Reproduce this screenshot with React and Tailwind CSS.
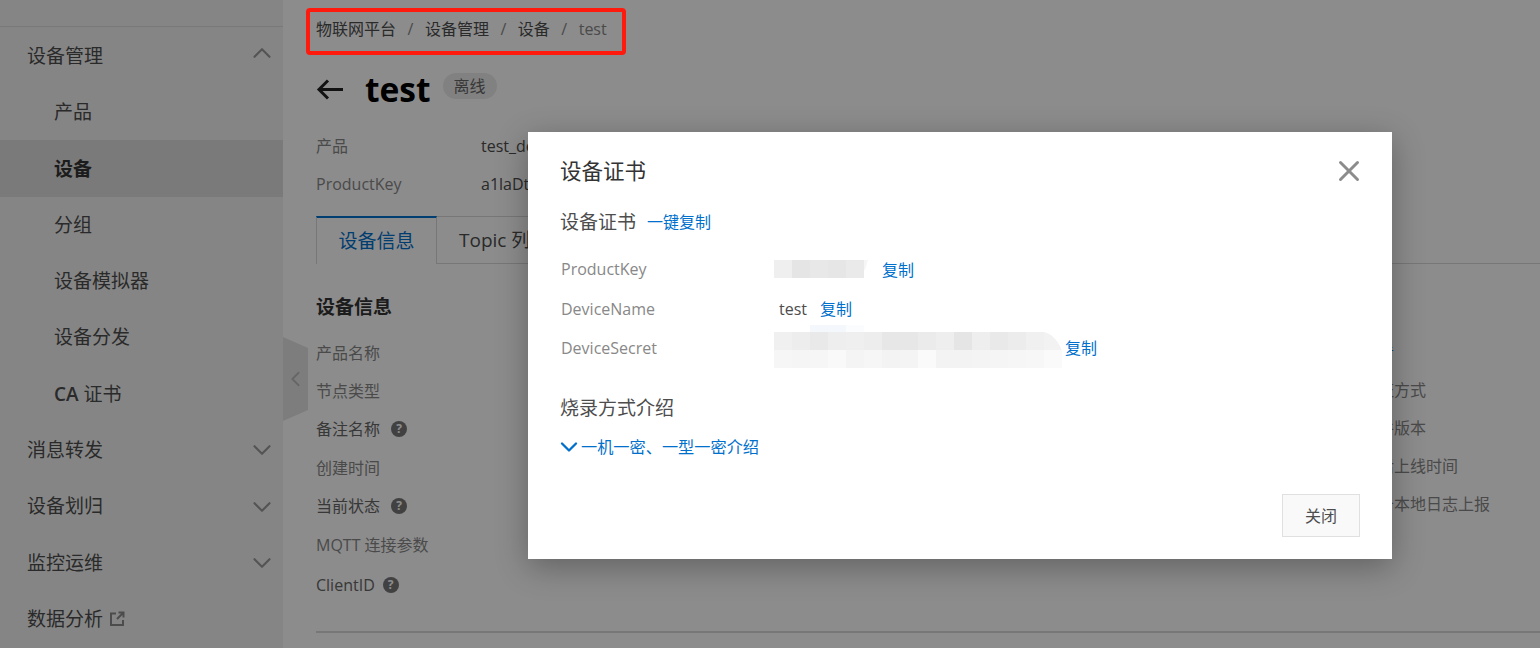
import { ChevronDown, ChevronUp, ChevronLeft, X } from 'lucide-react'

const menu = [
  { label: '设备管理', open: true },
  { label: '产品', sub: true },
  { label: '设备', sub: true, active: true },
  { label: '分组', sub: true },
  { label: '设备模拟器', sub: true },
  { label: '设备分发', sub: true },
  { label: '证书', prefix: 'CA', sub: true },
  { label: '消息转发', closed: true },
  { label: '设备划归', closed: true },
  { label: '监控运维', closed: true },
  { label: '数据分析', external: true },
]

const leftRows = [
  { label: '产品名称', h: 'h-[38px]' },
  { label: '节点类型', h: 'h-[38px]' },
  { label: '备注名称', help: 'ml-[11px]', h: 'h-[38px]' },
  { label: '创建时间', h: 'h-[39px]' },
  { label: '当前状态', help: 'ml-[11px]', h: 'h-[38px]' },
  { label: 'MQTT 连接参数', h: 'h-[40px]' },
  { label: 'ClientID', help: 'ml-[8px]', h: 'h-[40px]' },
]

const rightRows = ['查看', '认证方式', '固件版本', '最后上线时间', '设备本地日志上报']

const keyCells = ['#efefef', '#e5e5e5', '#e8e8e8', '#e6e6e6', '#eaeaea']
const secretTop = ['#f0f0f0', '#ededed', '#e9e9e9', '#eeeeee', '#efefef', '#ededed', '#e7e7e7', '#e7e7e7', '#ebebeb', '#eeeeee', '#e5e5e5', '#eeeeee', '#e9e9e9', '#ececec', '#f0f0f0', '#f2f2f2']
const secretBottom = ['#f6f6f6', '#f5f5f5', '#f6f6f6', '#f9f9f9', '#f4f4f4', '#f6f6f6', '#f3f3f3', '#f4f4f4', '#fafafa', '#f3f3f3', '#f3f3f3', '#f4f4f4', '#f5f5f5', '#f6f6f6', '#f7f7f7', '#fafafa']

const Help = ({ className }) => (
  <span className={`${className} inline-flex h-4 w-4 items-center justify-center rounded-full bg-[#777] text-[12px] font-bold leading-none text-white`}>?</span>
)

const Copy = ({ className = '' }) => <a className={`text-[16px] text-[#0070cc] ${className}`}>复制</a>

const Sidebar = () => (
  <aside className="w-[283px] shrink-0 bg-[#f3f3f3] pt-[26px]">
    <div className="h-[2px] border-t border-[#dcdcdc]" />
    {menu.map((item) => (
      <div
        key={item.label}
        className={`flex items-center justify-between pr-[6px] text-[19px] ${item.sub ? 'pl-[54px]' : 'pl-[27px]'} ${item.active ? '-mt-[1px] h-[57.3px] bg-[#dedede] pt-[2px] font-bold text-[#333]' : 'h-[56.3px] text-[#4d4d4d]'}`}
      >
        <span className="flex items-center">
          {item.prefix && <span className="mr-[5px] font-semibold">{item.prefix}</span>}
          {item.label}
          {item.external && (
            <svg className="ml-[6px] h-[16px] w-[16px]" viewBox="0 0 16 16" fill="none" stroke="#8a8a8a" strokeWidth="2">
              <path d="M7 2.5H2v11.5h12V9" />
              <path d="M9.5 1.5h5v5M14 2 8 8" />
            </svg>
          )}
        </span>
        {item.open && <ChevronUp className="h-[30px] w-[30px] -translate-y-[3px] text-[#999]" strokeWidth={1.7} />}
        {item.closed && <ChevronDown className="h-[30px] w-[30px] text-[#999]" strokeWidth={1.7} />}
      </div>
    ))}
  </aside>
)

const Main = () => (
  <main className="relative min-w-0 flex-1 bg-white pl-[33px]">
    {/* breadcrumb */}
    <div className="flex h-[58px] items-center text-[16px] text-[#4d4d4d]">
      <span>物联网平台</span>
      <span className="mx-[11.5px] text-[#888]">/</span>
      <span>设备管理</span>
      <span className="mx-[11.5px] text-[#888]">/</span>
      <span>设备</span>
      <span className="mx-[11.5px] text-[#888]">/</span>
      <span className="text-[#888]">test</span>
    </div>

    {/* title */}
    <div className="flex h-[62px] items-center">
      <svg className="h-[24px] w-[28px]" viewBox="0 0 28 24" fill="none" stroke="#222" strokeWidth="3">
        <path d="M27 12.5H3M12 3.5l-9 9 9 9" />
      </svg>
      <span className="ml-[21px] translate-y-[1px] text-[33.5px] font-bold leading-none text-black">test</span>
      <span className="ml-[12px] -translate-y-[3px] rounded-full bg-[#ececec] px-[11px] py-[1px] text-[16px] text-[#666]">离线</span>
    </div>

    <div className="mt-[7px] flex h-[38px] items-center text-[16px] text-[#888]">
      <span className="w-[165px]">产品</span>
      <span className="text-[#4d4d4d]">test_device_product</span>
    </div>
    <div className="flex h-[38px] items-center text-[16px] text-[#888]">
      <span className="w-[165px]">ProductKey</span>
      <span className="text-[#4d4d4d]">a1laDtxxxxx</span>
    </div>

    {/* tabs */}
    <div className="mt-[13px] flex h-[48px] border-b border-[#d9d9d9] text-[19px]">
      <div className="flex h-[48px] w-[121px] items-center justify-center border-x border-t-2 border-x-[#d9d9d9] border-t-[#0070cc] bg-white text-[#0070cc]">设备信息</div>
      <div className="flex items-center border-r border-t border-[#d9d9d9] px-[22px] text-[#4d4d4d]">Topic 列表</div>
    </div>

    <h3 className="mt-[29px] h-[28px] text-[19px] font-bold leading-[28px] text-[#333]">设备信息</h3>

    <div className="mt-[13px] flex text-[16px] text-[#888]">
      <div className="w-[1046px]">
        {leftRows.map((row) => (
          <div key={row.label} className={`flex items-center ${row.h} ${row.help ? 'text-[#666]' : ''}`}>
            {row.label}
            {row.help && <Help className={row.help} />}
          </div>
        ))}
      </div>
      <div className="-mt-[1px]">
        {rightRows.map((label, i) => (
          <div key={label} className={`flex h-[38px] items-center ${i === 0 ? 'text-[#0070cc]' : ''}`}>{label}</div>
        ))}
      </div>
    </div>

    <div className="mt-[26px] h-[2px] bg-[#d9d9d9]" />

    {/* collapse handle */}
    <div className="absolute left-0 top-[337px] flex h-[84px] w-[25px] items-center justify-center bg-[#e4e4e4] [clip-path:polygon(0_0,100%_13%,100%_87%,0_100%)]">
      <ChevronLeft className="h-[30px] w-[30px] text-[#bbb]" strokeWidth={1.7} />
    </div>
  </main>
)

// pixelated patch that hides the device secret in the picture
const Mosaic = () => (
  <svg className="h-[36px] w-[288px] translate-y-[2px] overflow-visible" viewBox="0 0 288 36">
    <rect x="36" y="-7" width="36" height="7" fill="#f4f8fc" />
    <rect x="72" y="-7" width="18" height="7" fill="#fafcfe" />
    {secretTop.map((c, i) => <rect key={i} x={i * 18} y="0" width="18" height="18" fill={c} />)}
    {secretBottom.map((c, i) => <rect key={i} x={i * 18} y="18" width="18" height="18" fill={c} />)}
    <path d="M270 0h18v19q-6-16-18-19z" fill="#fff" />
  </svg>
)

const CertModal = () => (
  <div className="absolute left-[528px] top-[132px] flex h-[427px] w-[864px] flex-col bg-white pl-[33px] pr-[32px] shadow-[0_8px_30px_rgba(0,0,0,0.3)]">
    <div className="flex h-[78px] items-center justify-between pt-[1px]">
      <h2 className="-ml-px text-[21.5px] font-normal text-[#333]">设备证书</h2>
      <X className="-mr-[6px] -translate-y-[1px] h-[34px] w-[34px] text-[#8c8c8c]" strokeWidth={2.1} />
    </div>

    <div className="mt-[-3px] -ml-px flex h-[30px] items-center">
      <span className="text-[19px] text-[#4d4d4d]">设备证书</span>
      <a className="ml-[11px] text-[16px] text-[#0070cc]">一键复制</a>
    </div>

    <div className="mt-[12px] flex h-[40px] items-center text-[16px]">
      <span className="w-[213px] text-[#888]">ProductKey</span>
      <svg className="h-[18px] w-[94px]" viewBox="0 0 94 18">
        {keyCells.map((c, i) => <rect key={i} x={i * 18} y="0" width="18" height="18" fill={c} />)}
        <path d="M90 0h4l-3 10h-1z" fill="#f6f6f6" />
      </svg>
      <Copy className="ml-[14px] translate-y-[1px]" />
    </div>
    <div className="flex h-[40px] items-center text-[16px]">
      <span className="w-[213px] text-[#888]">DeviceName</span>
      <span className="ml-[5px] text-[#4d4d4d]">test</span>
      <Copy className="ml-[13px]" />
    </div>
    <div className="flex h-[38px] items-center text-[16px]">
      <span className="w-[213px] text-[#888]">DeviceSecret</span>
      <Mosaic />
      <Copy className="ml-[3px]" />
    </div>

    <h3 className="-ml-px mt-[26px] h-[30px] text-[19px] font-normal leading-[30px] text-[#4d4d4d]">烧录方式介绍</h3>
    <div className="mt-[9px] flex h-[30px] items-center text-[16.2px] text-[#0070cc]">
      <ChevronDown className="-ml-[6px] h-[28px] w-[28px]" strokeWidth={2} />
      <span className="-ml-[2px]">一机一密、一型一密介绍</span>
    </div>

    <div className="mt-auto mb-[22px] flex justify-end">
      <button className="h-[43px] w-[78px] border border-[#e0e0e0] bg-[#f9f9f9] text-[16px] text-[#4d4d4d]">关闭</button>
    </div>
  </div>
)

const App = () => (
  <div className="relative flex h-[648px] w-[1540px] overflow-hidden font-['Open_Sans','Noto_Sans_CJK_SC',sans-serif]">
    <Sidebar />
    <Main />
    <div className="absolute inset-0 bg-black/45" />
    <CertModal />
    {/* red annotation round the breadcrumb */}
    <div className="absolute left-[306px] top-[8px] h-[47px] w-[320px] rounded-[4px] border-4 border-[#ff1a0d]" />
  </div>
)

export default App
